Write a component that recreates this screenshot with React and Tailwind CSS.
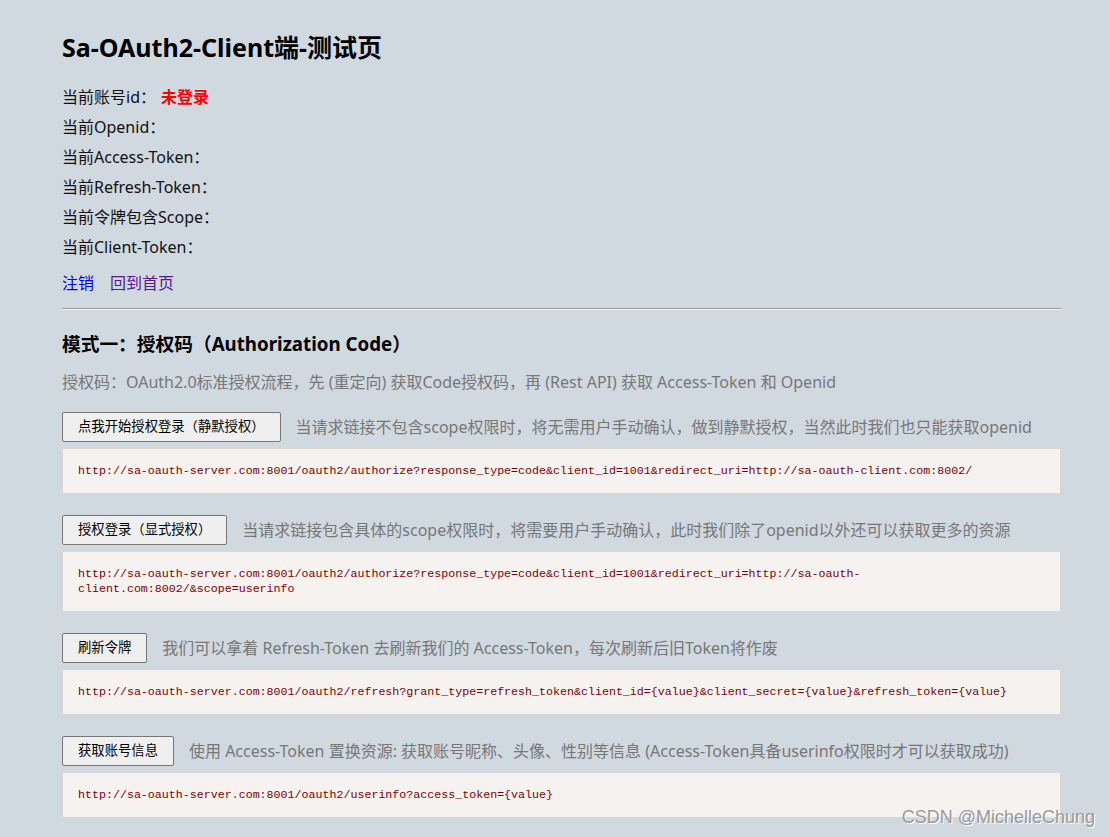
import React from "react";

const sans = { fontFamily: '"Noto Sans", "Noto Sans CJK SC", sans-serif' };

function Row({ label, desc, code }) {
  return (
    <div>
      <div className="flex items-center h-[30px]">
        <button className="h-[30px] px-[15px] bg-[#efefef] border border-[#767676] rounded-[2px] text-[13.33px] text-black leading-none shrink-0">
          {label}
        </button>
        <span className="ml-[15px] text-[16px] text-[#777] whitespace-nowrap">{desc}</span>
      </div>
      <div className="mt-[6px] bg-[#f5f2f0] border border-[#d9d6d4] pl-[15px] pr-[15px] pt-[14px] pb-[15px]">
        <div className="font-['Liberation_Mono',monospace] text-[11.65px] leading-[15px] text-[#800000] break-words">
          {code}
        </div>
      </div>
    </div>
  );
}

export default function App() {
  return (
    <div className="min-h-[837px] bg-[#d0d8e0] relative overflow-hidden" style={sans}>
      <div className="pl-[62px] pt-[31px] w-[1061px] text-[#111]">
        <h2 className="text-[25px] leading-[32px] font-bold text-black">Sa-OAuth2-Client端-测试页</h2>
        <div className="mt-[19px] text-[16px] leading-[30px]">
          <div>
            当前账号id：<span className="ml-[5px] text-[#ff0000] font-bold">未登录</span>
          </div>
          <div>当前Openid：</div>
          <div>当前Access-Token：</div>
          <div>当前Refresh-Token：</div>
          <div>当前令牌包含Scope：</div>
          <div>当前Client-Token：</div>
        </div>
        <div className="mt-[6px] text-[16px] leading-[30px] flex gap-[16px]">
          <a className="text-[#0000ee]">注销</a>
          <a className="text-[#551a8b]">回到首页</a>
        </div>
        <div className="mt-[10px] border-t border-t-[#9a9a9a] border-b border-b-[#f4f4f4]" />
        <h3 className="mt-[20px] text-[18.72px] leading-[28px] font-bold text-black">模式一：授权码（Authorization Code）</h3>
        <p className="mt-[12px] text-[16px] leading-[24px] text-[#777]">
          授权码：OAuth2.0标准授权流程，先 (重定向) 获取Code授权码，再 (Rest API) 获取 Access-Token 和 Openid
        </p>
        <div className="mt-[18px] flex flex-col gap-[21px]">
          <Row
            label="点我开始授权登录（静默授权）"
            desc="当请求链接不包含scope权限时，将无需用户手动确认，做到静默授权，当然此时我们也只能获取openid"
            code="http://sa-oauth-server.com:8001/oauth2/authorize?response_type=code&client_id=1001&redirect_uri=http://sa-oauth-client.com:8002/"
          />
          <Row
            label="授权登录（显式授权）"
            desc="当请求链接包含具体的scope权限时，将需要用户手动确认，此时我们除了openid以外还可以获取更多的资源"
            code="http://sa-oauth-server.com:8001/oauth2/authorize?response_type=code&client_id=1001&redirect_uri=http://sa-oauth-client.com:8002/&scope=userinfo"
          />
          <Row
            label="刷新令牌"
            desc="我们可以拿着 Refresh-Token 去刷新我们的 Access-Token，每次刷新后旧Token将作废"
            code="http://sa-oauth-server.com:8001/oauth2/refresh?grant_type=refresh_token&client_id={value}&client_secret={value}&refresh_token={value}"
          />
          <Row
            label="获取账号信息"
            desc="使用 Access-Token 置换资源: 获取账号昵称、头像、性别等信息 (Access-Token具备userinfo权限时才可以获取成功)"
            code="http://sa-oauth-server.com:8001/oauth2/userinfo?access_token={value}"
          />
        </div>
      </div>
      <div
        className="absolute right-[15px] top-[805px] text-[18px] leading-[24px] text-[#9a9a9a]"
        style={{ textShadow: "1px 1px 0 #fff", fontFamily: '"Liberation Sans", sans-serif' }}
      >
        CSDN @MichelleChung
      </div>
    </div>
  );
}
